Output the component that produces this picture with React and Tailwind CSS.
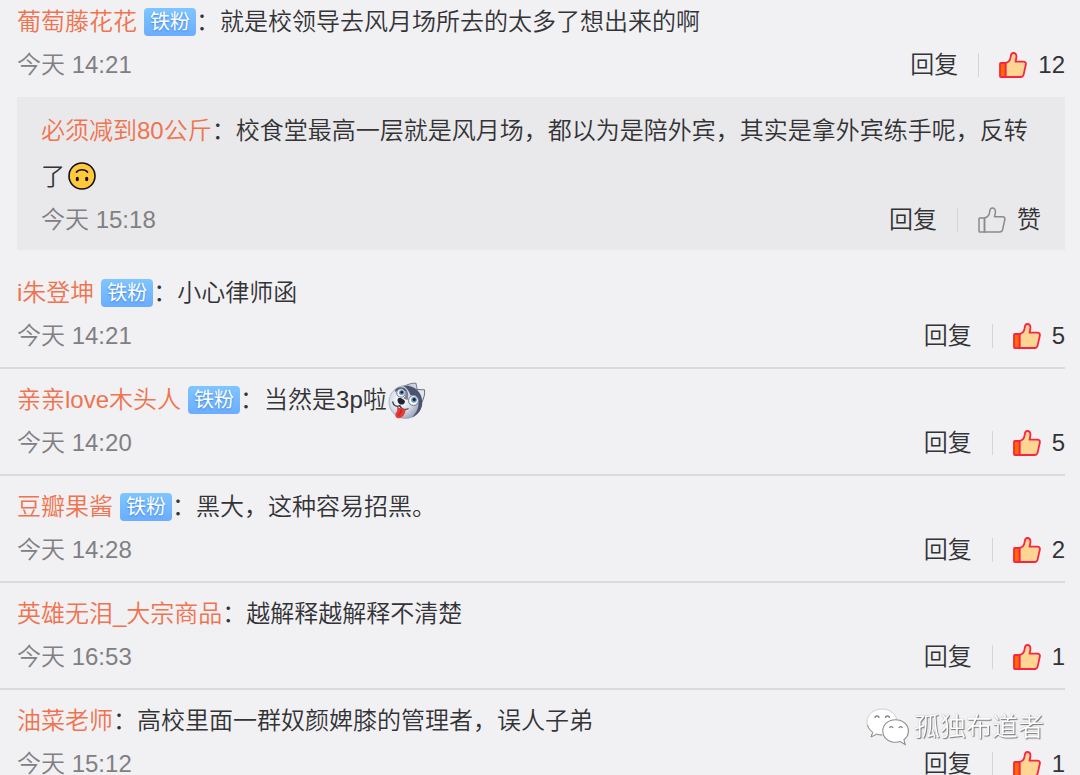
import React from "react";

const comments = [
  {
    user: "葡萄藤花花",
    fan: true,
    text: "就是校领导去风月场所去的太多了想出来的啊",
    time: "今天 14:21",
    likes: 12,
    reply: {
      user: "必须减到80公斤",
      text: "校食堂最高一层就是风月场，都以为是陪外宾，其实是拿外宾练手呢，反转了",
      emoji: "upside",
      time: "今天 15:18",
    },
  },
  { user: "i朱登坤", fan: true, text: "小心律师函", time: "今天 14:21", likes: 5 },
  { user: "亲亲love木头人", fan: true, text: "当然是3p啦", emoji: "husky", time: "今天 14:20", likes: 5 },
  { user: "豆瓣果酱", fan: true, text: "黑大，这种容易招黑。", time: "今天 14:28", likes: 2 },
  { user: "英雄无泪_大宗商品", text: "越解释越解释不清楚", time: "今天 16:53", likes: 1 },
  { user: "油菜老师", text: "高校里面一群奴颜婢膝的管理者，误人子弟", time: "今天 15:12", likes: 1 },
];

function ThumbIcon({ liked }) {
  const stroke = liked ? "#fb2340" : "#8a8a8d";
  return (
    <svg viewBox="0 0 28 26" className="h-[26px] w-7 shrink-0" aria-hidden="true" stroke={stroke} strokeWidth={liked ? 1.8 : 1.5} strokeLinejoin="round">
      <path
        d="M6.5 11C9.400 10.400 11.200 8.200 11.600 5.200C11.900 2.400 12.700 1 14.300 1C16.600 1 17.600 2.600 17.400 5C17.300 6.800 16.900 8.200 16.500 9.700H24.300C26.400 9.700 27.200 11 26.800 12.700L24.600 22.600C24.200 24.300 23.300 25 21.700 25H6.500Z"
        fill={liked ? "#ffd593" : "none"}
      />
      <path d="M1.800 11H6.500V25H1.800C1.300 25 1 24.700 1 24.200V11.800C1 11.300 1.300 11 1.800 11Z" fill={liked ? "#ff6a00" : "none"} />
    </svg>
  );
}

function UpsideDownFace() {
  return (
    <svg viewBox="0 0 28 28" className="ml-[3px] inline-block size-7 align-[-5px]" role="img" aria-label="倒脸">
      <circle cx="14" cy="14" r="13" fill="#ffc83d" stroke="#111" strokeWidth="1.6" />
      <path d="M8.400 10.200C10.800 6.900 17.200 6.900 19.600 10.200" fill="none" stroke="#111" strokeWidth="1.600" strokeLinecap="round" />
      <ellipse cx="9.300" cy="17" rx="1.600" ry="2.200" fill="#111" />
      <ellipse cx="18.700" cy="17" rx="1.600" ry="2.200" fill="#111" />
    </svg>
  );
}

function HuskyFace() {
  return (
    <svg viewBox="0 0 38 38" className="-my-3 ml-px inline-block size-[38px] align-baseline" role="img" aria-label="二哈">
      <defs>
        <radialGradient id="fur" cx="35%" cy="45%" r="70%">
          <stop offset="0" stopColor="#ffffff" />
          <stop offset="0.5" stopColor="#d5dbe8" />
          <stop offset="1" stopColor="#8791a8" />
        </radialGradient>
      </defs>
      <path d="M16 4.500C20 2 24 1 28 1.200L29.500 9Z" fill="#cfd4df" stroke="#6a7184" strokeWidth="0.9" />
      <path d="M28 7.500L36.500 7.800C37 12 36 16 34 20Z" fill="#e4e7ee" stroke="#59617a" strokeWidth="0.9" />
      <circle cx="17.500" cy="20" r="16.500" fill="url(#fur)" stroke="#929cb0" strokeWidth="0.6" />
      <path d="M15 3.800C25 2.500 34 9 34.200 20C34.400 28 29 33.500 24 35.500C29 30 30.500 26 30.500 21C31 15 27 12 22.500 13.500C21 9 19 6 15 3.800Z" fill="#4b546f" />
      <path d="M17.500 7C20.500 9.500 21 14 19.500 18L15.500 16.500C18 13.500 18.500 10 17.500 7Z" fill="#78829b" />
      <path d="M7.500 9.500C9 5 16 5 18 9" fill="none" stroke="#525c76" strokeWidth="1.700" />
      <circle cx="13" cy="11" r="4.200" fill="#fff" stroke="#65728b" strokeWidth="1" />
      <circle cx="13.600" cy="10.600" r="2.600" fill="#6c93b8" />
      <circle cx="13.800" cy="10.300" r="1.300" fill="#17202f" />
      <circle cx="25.500" cy="18.500" r="4.900" fill="#fff" stroke="#65728b" strokeWidth="1" />
      <circle cx="26" cy="17.800" r="2.900" fill="#6c93b8" />
      <circle cx="26.200" cy="17.500" r="1.500" fill="#17202f" />
      <path d="M10 16.500C12 15 16.500 17.300 17 19.800C16.500 22.500 14 23.300 11.500 22C9.500 20.600 9 17.800 10 16.500Z" fill="#20242e" />
      <path d="M4.500 19.500C5.500 23.500 8.500 25.500 11.800 23.500C13 27.500 17 28.500 20.500 26.500" fill="none" stroke="#39404f" strokeWidth="1.300" />
      <path d="M9 24.500C11.500 26.500 14.500 26.500 17.500 27.300C18 31.500 14 37 10 36.300C6.500 35.500 7 31.500 9 29.500C9.600 28 9.200 26.500 9 24.500Z" fill="#e53a33" />
      <path d="M13 27.500C13.500 30 11.500 32 10.500 33.800" fill="none" stroke="#a81d1d" strokeWidth="0.900" />
    </svg>
  );
}

function WeChatLogo() {
  return (
    <svg viewBox="0 0 44 38" className="h-[38px] w-11 shrink-0" aria-hidden="true">
      <path d="M16 1C7.600 1 1 6.700 1 14C1 18.300 3.300 22 6.800 24.300L5 29L10.700 26.200C12.500 26.700 14.200 27 16 27C24.400 27 31 21.300 31 14S24.400 1 16 1Z" fill="#fff" stroke="#c4c4c6" strokeWidth="0.800" />
      <path d="M1.500 17C2.300 20 4.200 22.600 6.800 24.300L5 29L10.700 26.200C12.500 26.700 14.200 27 16 27" fill="none" stroke="#8c8c8e" strokeWidth="1" />
      <path d="M29.500 11.700C22.400 11.700 16.800 16.600 16.800 23S22.400 34.300 29.500 34.300C31.200 34.300 32.800 34 34.200 33.500L39.200 36.500L37.900 31.700C40.700 29.600 42.400 26.500 42.400 23C42.400 16.600 36.600 11.700 29.500 11.700Z" fill="#fff" stroke="#8e8e90" strokeWidth="1.100" />
      <g fill="none" stroke="#858587" strokeWidth="1.300">
        <path d="M9 10A2 2 0 0 1 13 10M19.500 10A2 2 0 0 1 23.500 10M23.500 20A1.800 1.800 0 0 1 27 20M33 20A1.800 1.800 0 0 1 36.500 20" />
      </g>
    </svg>
  );
}

function FanBadge() {
  return (
    <span className="relative -top-0.5 ml-[7px] inline-flex h-7 items-center rounded bg-linear-to-b from-[#7fc6ff] to-[#6bacff] px-1.5 align-middle text-[20px] leading-7 font-normal text-white [text-shadow:0_1px_2px_#3f86d8]">
      铁粉
    </span>
  );
}

function Body({ item }) {
  return (
    <p className="leading-[46px]">
      <a href="#user" className="text-[#f0734f]">{item.user}</a>
      {item.fan && <FanBadge />}
      ：{item.text}
      {item.emoji === "upside" && <UpsideDownFace />}
      {item.emoji === "husky" && <HuskyFace />}
    </p>
  );
}

function Meta({ item }) {
  return (
    <div className="flex h-10 items-center justify-between leading-10">
      <time className="text-[#808083]">{item.time}</time>
      <div className="flex items-center">
        <button type="button">回复</button>
        <span className="mx-5 h-6 w-px bg-[#d5d5d8]" />
        <button type="button" className="flex items-center gap-[11px]">
          <ThumbIcon liked={Boolean(item.likes)} />
          <span>{item.likes || "赞"}</span>
        </button>
      </div>
    </div>
  );
}

export default function App() {
  return (
    <main className="relative min-h-screen overflow-hidden bg-[#f1f1f4] pr-[15px] font-['Liberation_Sans','Noto_Sans_CJK_SC',sans-serif] text-[24px] font-[350] text-[#333336]">
      <ul className="-mt-[9px]">
        {comments.map((item) => (
          <li key={item.user} className={item.reply ? "pt-2 pb-3 pl-[17px]" : "border-b-2 border-[#dadadd] pt-2 pb-[11px] pl-[17px]"}>
            <Body item={item} />
            <Meta item={item} />
            {item.reply && (
              <div className="mt-3 bg-[#e9e9eb] px-6 pt-[11px] pb-2.5">
                <Body item={item.reply} />
                <Meta item={item.reply} />
              </div>
            )}
          </li>
        ))}
      </ul>
      <div className="pointer-events-none fixed right-9 bottom-7 flex items-center gap-1 text-[26px] leading-10 text-white [text-shadow:1px_1px_1px_#777,0_0_1px_#999]">
        <WeChatLogo />
        <span>孤独布道者</span>
      </div>
    </main>
  );
}
